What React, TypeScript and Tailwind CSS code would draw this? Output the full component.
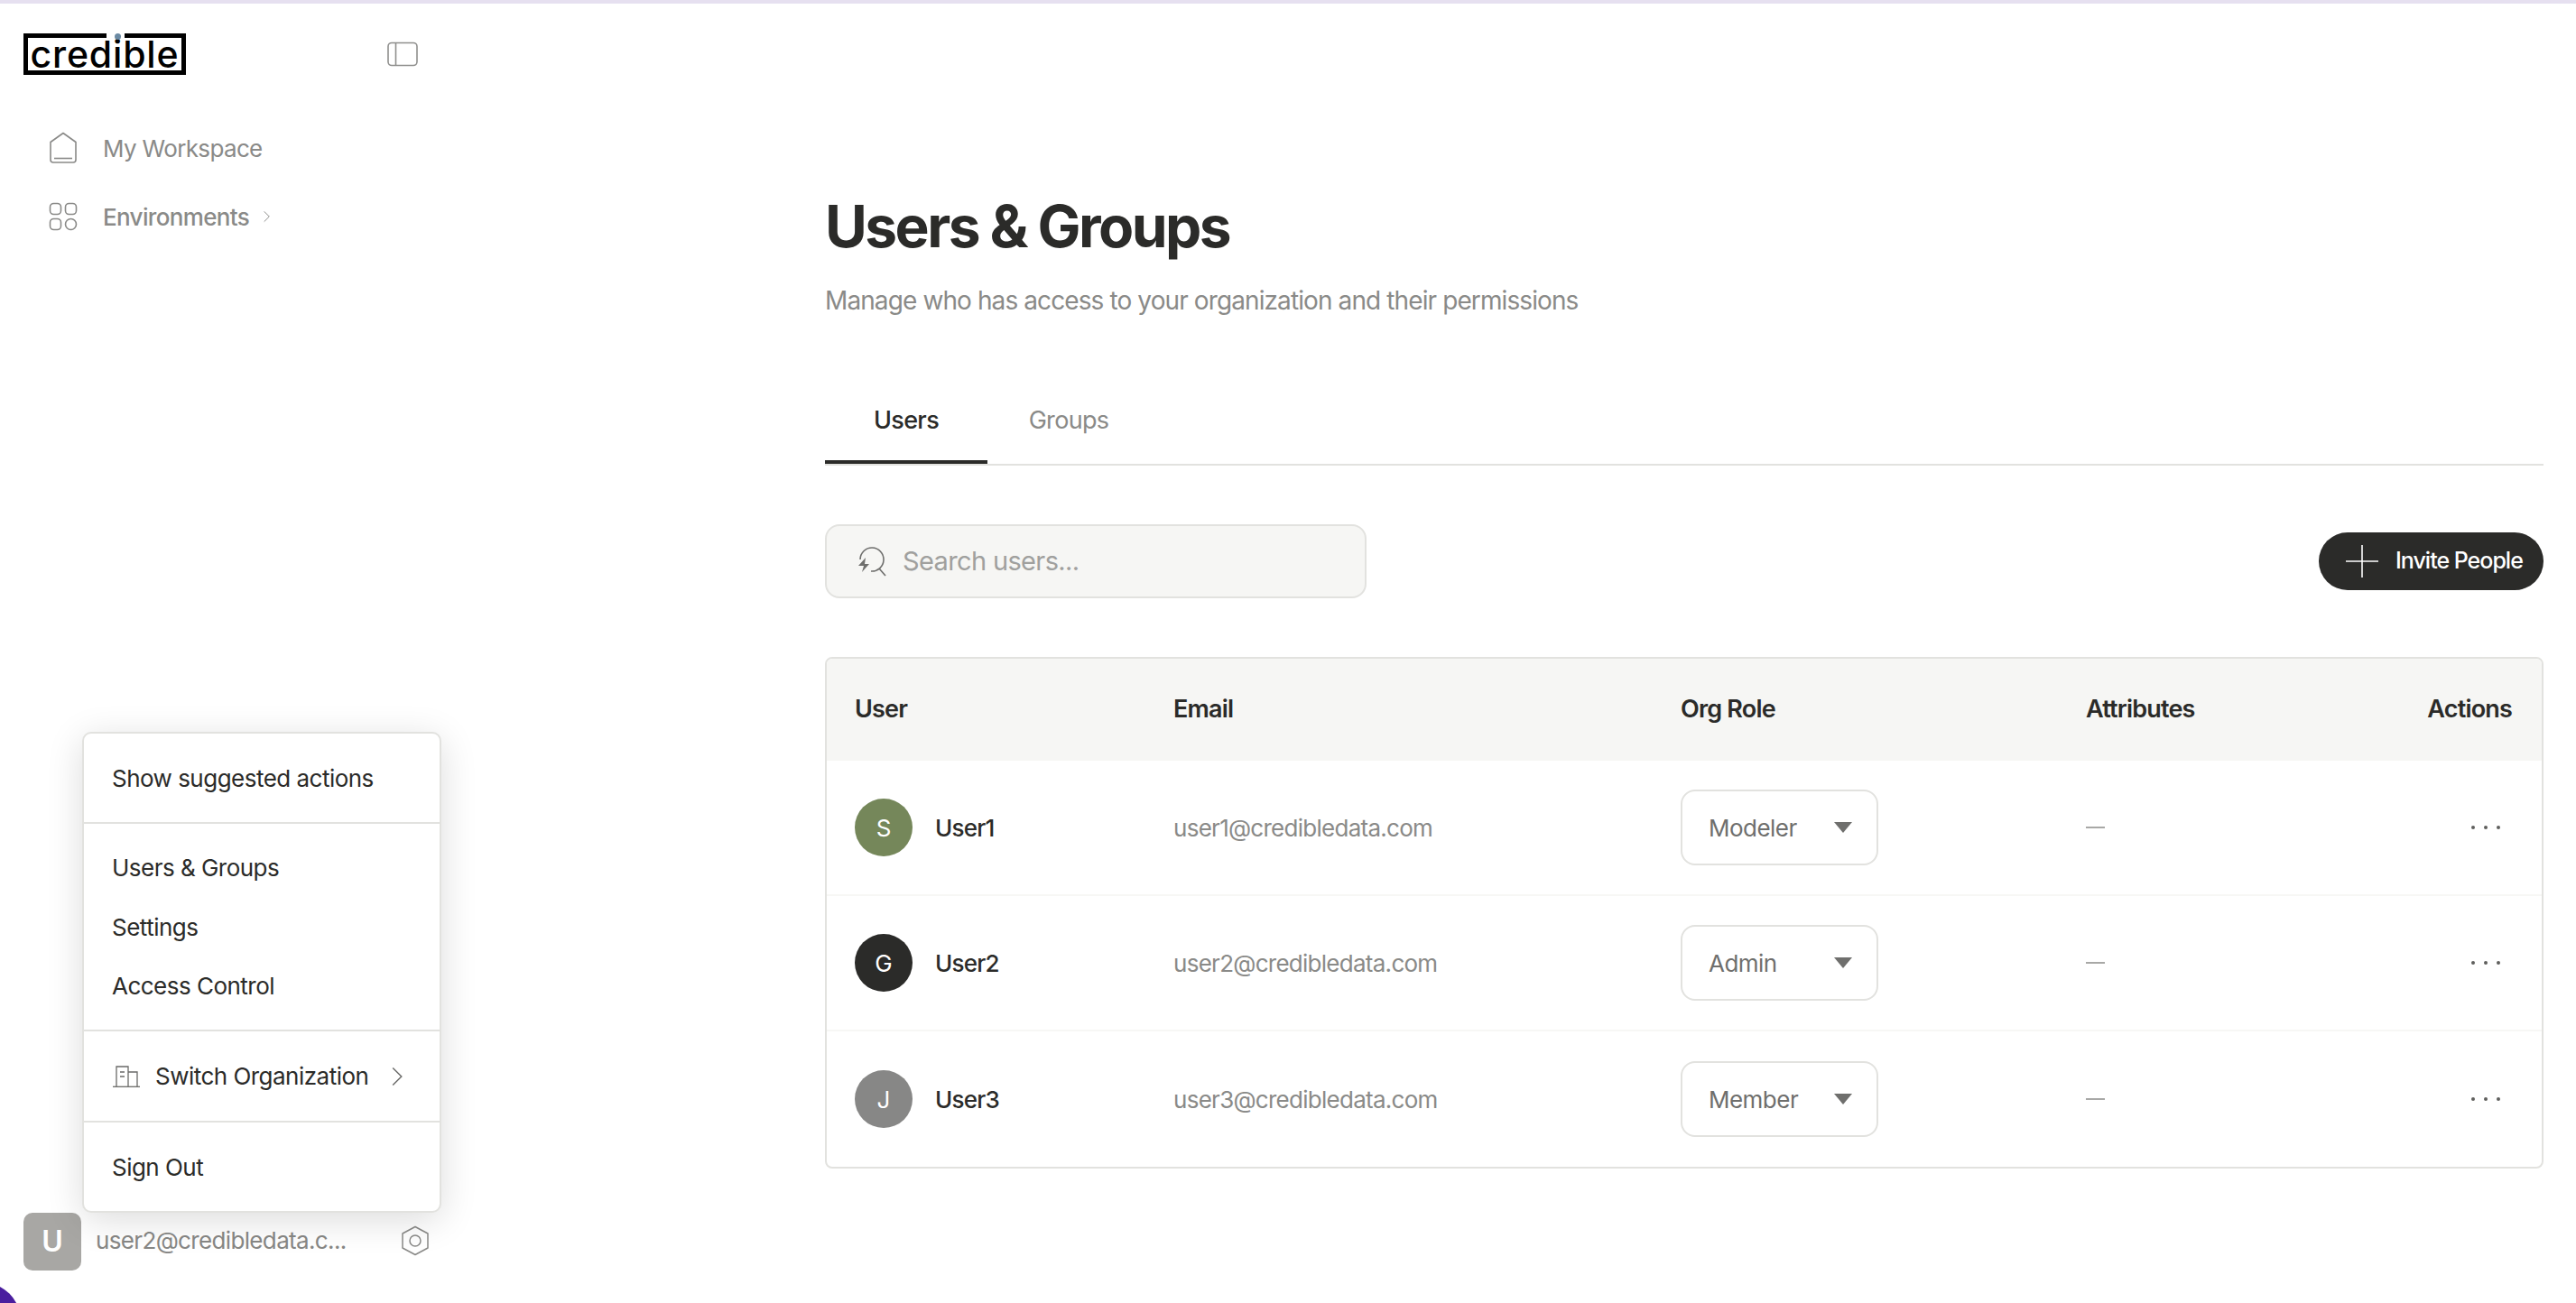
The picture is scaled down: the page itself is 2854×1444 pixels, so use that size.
import React from 'react';

const users = [
  { initial: 'S', name: 'User1', email: 'user1@credibledata.com', role: 'Modeler', avatar: 'bg-[#75875a]' },
  { initial: 'G', name: 'User2', email: 'user2@credibledata.com', role: 'Admin', avatar: 'bg-[#2b2b29]' },
  { initial: 'J', name: 'User3', email: 'user3@credibledata.com', role: 'Member', avatar: 'bg-[#878786]' },
];

function HomeIcon() {
  return (
    <svg width="32" height="36" viewBox="0 0 32 36" fill="none" stroke="#8a8a88" strokeWidth="1.6">
      <path d="M16 1.5 L30 11.5 V31 a3 3 0 0 1 -3 3 H5 a3 3 0 0 1 -3 -3 V11.5 Z" strokeLinejoin="round" />
      <path d="M6 29.5 H26" />
    </svg>
  );
}

function GridIcon() {
  return (
    <svg width="32" height="32" viewBox="0 0 32 32" fill="none" stroke="#8a8a88" strokeWidth="1.6">
      <rect x="1.5" y="1.5" width="12" height="12" rx="4" />
      <rect x="18.5" y="1.5" width="12" height="12" rx="4" />
      <rect x="1.5" y="18.5" width="12" height="12" rx="4" />
      <circle cx="24.5" cy="24.5" r="6" />
    </svg>
  );
}

function PanelIcon() {
  return (
    <svg width="34" height="28" viewBox="0 0 34 28" fill="none" stroke="#8f8f8d" strokeWidth="1.6">
      <rect x="1" y="1.5" width="32" height="25" rx="4" />
      <path d="M9.5 1.5 V26.5" />
    </svg>
  );
}

function Chevron({ size, color }: { size: number; color: string }) {
  return (
    <svg width={size} height={size * 2} viewBox="0 0 10 20" fill="none" stroke={color} strokeWidth="1.2">
      <path d="M1 2 L9 10 L1 18" />
    </svg>
  );
}

function SearchBolt() {
  return (
    <svg width="34" height="34" viewBox="0 0 34 34" fill="none" stroke="#6f6f6d" strokeWidth="1.6">
      <path d="M4 15 A13 13 0 1 1 16 28" />
      <path d="M25 25 L32 33" />
      <path d="M10 13 L2 22 H8 L6 29 L14 20 H9 Z" fill="#6f6f6d" stroke="none" />
    </svg>
  );
}

function BuildingIcon() {
  return (
    <svg width="30" height="24" viewBox="0 0 30 24" fill="none" stroke="#6a6a68" strokeWidth="1.3">
      <path d="M0 23.3 H30" />
      <path d="M4 23 V1 H17 V23" />
      <path d="M17 7 H27 V23" />
      <path d="M8 7 H13 M8 12 H13" />
    </svg>
  );
}

function HexIcon() {
  return (
    <svg width="32" height="34" viewBox="0 0 32 34" fill="none" stroke="#8a8a88" strokeWidth="1.5">
      <path d="M16 1.5 L30 9 V25 L16 32.5 L2 25 V9 Z" strokeLinejoin="round" />
      <circle cx="16" cy="17" r="6" />
    </svg>
  );
}

function Logo() {
  return (
    <div className="relative flex h-[46px] w-[180px] items-center justify-center border-[5px] border-black">
      <span className="font-['Inter',sans-serif] text-[41px] font-medium leading-none tracking-[0.02em] text-black">credible</span>
      <span className="absolute left-[87px] top-[-5px] h-[5px] w-[20px] bg-white" />
      <span className="absolute left-[96px] top-[-5px] h-[7px] w-[7px] rounded-full bg-[#6b8aa3]" />
    </div>
  );
}

function MenuItem({ label }: { label: string }) {
  return <div className="flex h-[65.5px] items-center pl-[31px] text-[26px] tracking-[-0.02em] text-[#2b2b29]">{label}</div>;
}

export default function App() {
  return (
    <div className="relative flex h-screen w-full overflow-hidden border-t-4 border-[#e6e0f0] bg-white font-['Inter',sans-serif]">
      {/* Sidebar */}
      <aside className="flex w-[500px] shrink-0 flex-col">
        <div className="flex items-center justify-between pl-[26px] pr-[37px] pt-[33px]">
          <Logo />
          <PanelIcon />
        </div>
        <nav className="mt-[50px] flex flex-col gap-[14px] pl-[54px]">
          <div className="flex h-[62px] items-center gap-[28px] text-[26px] tracking-[-0.025em] text-[#8a8a88]">
            <HomeIcon />
            <span>My Workspace</span>
          </div>
          <div className="flex h-[62px] items-center gap-[28px] text-[26px] font-medium tracking-[-0.025em] text-[#8a8a88]">
            <GridIcon />
            <span>Environments</span>
            <div className="-ml-[12px]">
              <Chevron size={7} color="#777775" />
            </div>
          </div>
        </nav>
        <div className="mt-auto flex items-center pb-[36px] pl-[26px] pr-[24px]">
          <div className="flex h-[64px] w-[64px] items-center justify-center rounded-[10px] bg-[#a8a7a4] text-[32px] font-semibold text-white">U</div>
          <span className="mb-[3px] ml-[16px] text-[26px] tracking-[-0.025em] text-[#888886]">user2@credibledata.c...</span>
          <div className="mb-[3px] ml-auto">
            <HexIcon />
          </div>
        </div>
      </aside>

      {/* Main */}
      <main className="flex-1 pl-[414px] pr-[36px] pt-[207px]">
        <h1 className="h-[80px] text-[64px] font-bold leading-[80px] tracking-[-0.04em] text-[#2b2b29]">Users &amp; Groups</h1>
        <p className="mt-[22px] h-[40px] text-[28px] leading-[40px] tracking-[-0.032em] text-[#8a8a88]">Manage who has access to your organization and their permissions</p>

        <div className="mt-[69px] flex border-b-2 border-[#e2e2df]">
          <div className="flex h-[92px] w-[180px] items-center justify-center border-b-4 border-[#2b2b29] text-[27px] font-medium tracking-[-0.025em] text-[#2b2b29]">Users</div>
          <div className="flex h-[92px] w-[180px] items-center justify-center pb-[4px] text-[27px] tracking-[-0.025em] text-[#8a8a88]">Groups</div>
        </div>

        <div className="mt-[65px] flex items-center justify-between">
          <div className="flex h-[82px] w-[600px] items-center gap-[17px] rounded-[16px] border-2 border-[#e2e2df] bg-[#f6f6f4] pl-[33px]">
            <SearchBolt />
            <span className="text-[29px] tracking-[-0.022em] text-[#a0a09e]">Search users...</span>
          </div>
          <div className="flex h-[64px] w-[249px] items-center gap-[19px] rounded-full bg-[#2b2b29] pl-[30px] text-[25px] font-medium tracking-[-0.04em] text-white">
            <svg width="36" height="36" viewBox="0 0 36 36" fill="none" stroke="#ffffff" strokeWidth="1.6">
              <path d="M18 0 V36 M0 18 H36" />
            </svg>
            <span>Invite People</span>
          </div>
        </div>

        <div className="mt-[65px] overflow-hidden rounded-[8px] border-2 border-[#e2e2df]">
          <div className="grid h-[113px] grid-cols-[353px_562px_449px_1fr_auto] items-center bg-[#f6f6f4] pl-[31px] pr-[33px] text-[27px] font-semibold tracking-[-0.03em] text-[#2b2b29]">
            <span>User</span>
            <span>Email</span>
            <span>Org Role</span>
            <span>Attributes</span>
            <span>Actions</span>
          </div>
          {users.map((u, i) => (
            <div
              key={u.name}
              className={`grid h-[150px] grid-cols-[353px_562px_449px_1fr_auto] items-center pl-[31px] pr-[33px] ${i < 2 ? 'border-b-2 border-[#f7f7f5]' : ''}`}
            >
              <div className="flex items-center gap-[25px]">
                <div className={`flex h-[64px] w-[64px] items-center justify-center rounded-full text-[26px] text-white ${u.avatar}`}>{u.initial}</div>
                <span className="text-[26px] font-medium tracking-[-0.03em] text-[#2b2b29]">{u.name}</span>
              </div>
              <span className="text-[26px] tracking-[-0.028em] text-[#8a8a88]">{u.email}</span>
              <div className="flex h-[84px] w-[219px] items-center justify-between rounded-[16px] border-2 border-[#e2e2df] pl-[29px] pr-[27px] text-[26px] tracking-[-0.02em] text-[#6f6f6d]">
                <span>{u.role}</span>
                <svg width="20" height="12" viewBox="0 0 20 12" fill="#6f6f6d">
                  <path d="M0 0 H20 L10 12 Z" />
                </svg>
              </div>
              <span className="h-[2px] w-[21px] bg-[#a8a8a6]" />
              <div className="mr-[13px] flex gap-[10px]">
                <span className="h-[4px] w-[4px] rounded-full bg-[#5f5f5d]" />
                <span className="h-[4px] w-[4px] rounded-full bg-[#5f5f5d]" />
                <span className="h-[4px] w-[4px] rounded-full bg-[#5f5f5d]" />
              </div>
            </div>
          ))}
        </div>
      </main>

      {/* User menu */}
      <div className="absolute left-[91px] top-[807px] flex h-[533px] w-[398px] flex-col rounded-[10px] border-2 border-[#e2e2df] bg-white shadow-[0_8px_40px_rgba(0,0,0,0.14)]">
        <div className="flex h-[98px] items-center pl-[31px] text-[26px] tracking-[-0.02em] text-[#2b2b29]">Show suggested actions</div>
        <div className="flex h-[232px] flex-col justify-center border-y-2 border-[#e2e2df]">
          <MenuItem label="Users & Groups" />
          <MenuItem label="Settings" />
          <MenuItem label="Access Control" />
        </div>
        <div className="flex h-[99px] items-center pl-[32px] pr-[41px] text-[26px] tracking-[-0.02em] text-[#2b2b29]">
          <BuildingIcon />
          <span className="ml-[17px]">Switch Organization</span>
          <div className="ml-auto">
            <Chevron size={12} color="#6a6a68" />
          </div>
        </div>
        <div className="flex flex-1 items-center border-t-2 border-[#e2e2df] pl-[31px] text-[26px] tracking-[-0.02em] text-[#2b2b29]">Sign Out</div>
      </div>

      {/* Corner */}
      <div className="absolute bottom-[-63px] left-[-63px] h-[86px] w-[86px] rounded-full bg-[#4a1e9e]" />
    </div>
  );
}
